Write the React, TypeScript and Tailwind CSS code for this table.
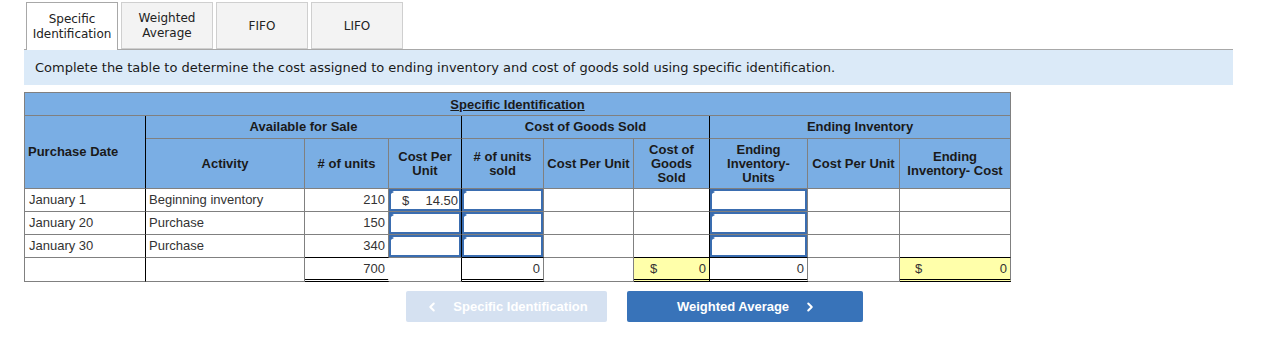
import { ChevronLeft, ChevronRight } from 'lucide-react';

const tabs = [
  { label: ['Specific', 'Identification'], active: true },
  { label: ['Weighted', 'Average'], active: false },
  { label: ['FIFO'], active: false },
  { label: ['LIFO'], active: false },
];

const colWidths = [121, 159, 84, 73, 82, 90, 76, 98, 92, 111];

const rows = [
  { date: 'January 1', activity: 'Beginning inventory', units: 210, cost: '14.50' },
  { date: 'January 20', activity: 'Purchase', units: 150, cost: '' },
  { date: 'January 30', activity: 'Purchase', units: 340, cost: '' },
];

const grid = 'border-[#808080]';

function EntryBox({ children }: { children?: React.ReactNode }) {
  return (
    <div className="relative h-[22px] border-2 border-[#3a6db0]">
      <span className="absolute -left-[2px] -top-[2px] w-0 h-0 border-y-[3px] border-y-transparent border-l-[5px] border-l-[#3a6db0]" />
      {children}
    </div>
  );
}

export default function App() {
  return (
    <div className="w-[1280px] h-[350px] bg-white font-['Liberation_Sans',Arial,sans-serif]">
      <div className="pl-6 pt-[2px] w-[1233px]">
        {/* method tabs */}
        <div className="flex gap-[3px] pl-[2px] relative z-10">
          {tabs.map((t) => (
            <div
              key={t.label.join(' ')}
              className={
                t.active
                  ? 'w-[92px] h-[48px] -mb-px bg-white border border-b-0 border-[#a8a8a8] flex flex-col items-center justify-center'
                  : 'w-[92px] h-[47px] bg-[#f3f3f3] border border-[#cfcfcf] flex flex-col items-center justify-center'
              }
            >
              {t.label.map((l) => (
                <span
                  key={l}
                  className={`font-['DejaVu_Sans',Verdana,sans-serif] text-[12px] leading-[15px] text-[#222] ${t.label.length === 1 ? 'mt-[2px]' : ''}`}
                >
                  {l}
                </span>
              ))}
            </div>
          ))}
        </div>
        <div className="h-[36px] border-t border-[#a8a8a8] bg-[#dbeaf8] flex items-center pl-[11px] pt-[1px]">
          <p className="font-['DejaVu_Sans',Verdana,sans-serif] text-[13px] text-[#1a1a1a]">
            Complete the table to determine the cost assigned to ending inventory and cost of goods sold using specific identification.
          </p>
        </div>

        {/* specific identification table */}
        <table className="mt-[7px] table-fixed border-separate border-spacing-0 w-[986px] border-l border-t border-[#808080] text-[13px]">
          <colgroup>
            {colWidths.map((w, i) => (
              <col key={i} style={{ width: w }} />
            ))}
          </colgroup>
          <thead className="bg-[#7aaee4] text-[#1a1a1a] font-bold">
            <tr className="h-[23px]">
              <th colSpan={10} className={`border-r border-b ${grid} underline font-bold pt-[1px]`}>
                Specific Identification
              </th>
            </tr>
            <tr className="h-[23px]">
              <th rowSpan={2} className={`border-r border-r-black border-b ${grid} text-left pl-[3px] font-bold`}>
                Purchase Date
              </th>
              <th colSpan={3} className={`border-b ${grid} border-r border-r-black font-bold`}>
                Available for Sale
              </th>
              <th colSpan={3} className={`border-b ${grid} border-r border-r-black font-bold`}>
                Cost of Goods Sold
              </th>
              <th colSpan={3} className={`border-b border-r ${grid} font-bold`}>
                Ending Inventory
              </th>
            </tr>
            <tr className="h-[50px] leading-[14px]">
              <th className={`border-r border-b ${grid} font-bold`}>Activity</th>
              <th className={`border-r border-b ${grid} font-bold`}>
                # of units
              </th>
              <th className={`border-b ${grid} border-r border-r-black font-bold`}>
                Cost Per
                <br />
                Unit
              </th>
              <th className={`border-r border-b ${grid} font-bold`}>
                # of units
                <br />
                sold
              </th>
              <th className={`border-r border-b ${grid} font-bold`}>Cost Per Unit</th>
              <th className={`border-b ${grid} border-r border-r-black font-bold`}>
                Cost of
                <br />
                Goods
                <br />
                Sold
              </th>
              <th className={`border-r border-b ${grid} font-bold`}>
                Ending
                <br />
                Inventory-
                <br />
                Units
              </th>
              <th className={`border-r border-b ${grid} font-bold`}>Cost Per Unit</th>
              <th className={`border-r border-b ${grid} font-bold`}>
                Ending
                <br />
                Inventory- Cost
              </th>
            </tr>
          </thead>
          <tbody className="text-[#333]">
            {rows.map((r, i) => {
              const last = i === rows.length - 1;
              const bottom = last ? 'border-b-black' : '';
              return (
                <tr key={r.date} className="h-[23px]">
                  <td className={`border-r border-r-black border-b ${grid} pl-[4px]`}>{r.date}</td>
                  <td className={`border-r border-b ${grid} pl-[3px]`}>{r.activity}</td>
                  <td className={`border-r border-b ${grid} ${bottom} text-right pr-[3px]`}>{r.units}</td>
                  <td className={`border-b ${grid} border-r border-r-black p-0`}>
                    <EntryBox>
                      {r.cost && (
                        <div className="flex justify-between items-center h-full pl-[11px] pr-[1px] leading-none">
                          <span>$</span>
                          <span>{r.cost}</span>
                        </div>
                      )}
                    </EntryBox>
                  </td>
                  <td className={`border-r border-b ${grid} ${bottom} p-0`}>
                    <EntryBox />
                  </td>
                  <td className={`border-r border-b ${grid}`} />
                  <td className={`border-b ${grid} ${bottom} border-r border-r-black`} />
                  <td className={`border-r border-b ${grid} ${bottom} p-0`}>
                    <EntryBox />
                  </td>
                  <td className={`border-r border-b ${grid}`} />
                  <td className={`border-r border-b ${grid} ${bottom}`} />
                </tr>
              );
            })}
            <tr className="h-[24px]">
              <td className={`border-r border-r-black border-b ${grid}`} />
              <td className={`border-r border-b ${grid}`} />
              <td className="border-r border-r-white border-b-[3px] border-b-black border-double text-right pr-[3px]">700</td>
              <td className={`border-b ${grid} border-r border-r-black`} />
              <td className={`border-r ${grid} border-b-[3px] border-b-black border-double text-right pr-[3px]`}>0</td>
              <td className={`border-r border-b ${grid}`} />
              <td className="border-r border-r-black border-b-[3px] border-b-black border-double bg-[#ffffaa]">
                <div className="flex justify-between pl-[16px] pr-[3px]">
                  <span>$</span>
                  <span>0</span>
                </div>
              </td>
              <td className={`border-r ${grid} border-b-[3px] border-b-black border-double text-right pr-[3px]`}>0</td>
              <td className={`border-r border-b ${grid}`} />
              <td className={`border-r ${grid} border-b-[3px] border-b-black border-double bg-[#ffffaa]`}>
                <div className="flex justify-between pl-[15px] pr-[3px]">
                  <span>$</span>
                  <span>0</span>
                </div>
              </td>
            </tr>
          </tbody>
        </table>

        {/* previous / next method */}
        <div className="mt-[9px] flex gap-[20px] pl-[382px]">
          <button className="w-[201px] h-[31px] rounded-[2px] bg-[#d5e1f1] text-white font-bold text-[13px] flex items-center justify-center gap-[14px]">
            <ChevronLeft size={14} strokeWidth={3.5} />
            Specific Identification
          </button>
          <button className="w-[236px] h-[31px] rounded-[2px] bg-[#3873b9] text-white font-bold text-[13px] flex items-center justify-center gap-[14px] pl-[4px]">
            Weighted Average
            <ChevronRight size={14} strokeWidth={3.5} />
          </button>
        </div>
      </div>
    </div>
  );
}
